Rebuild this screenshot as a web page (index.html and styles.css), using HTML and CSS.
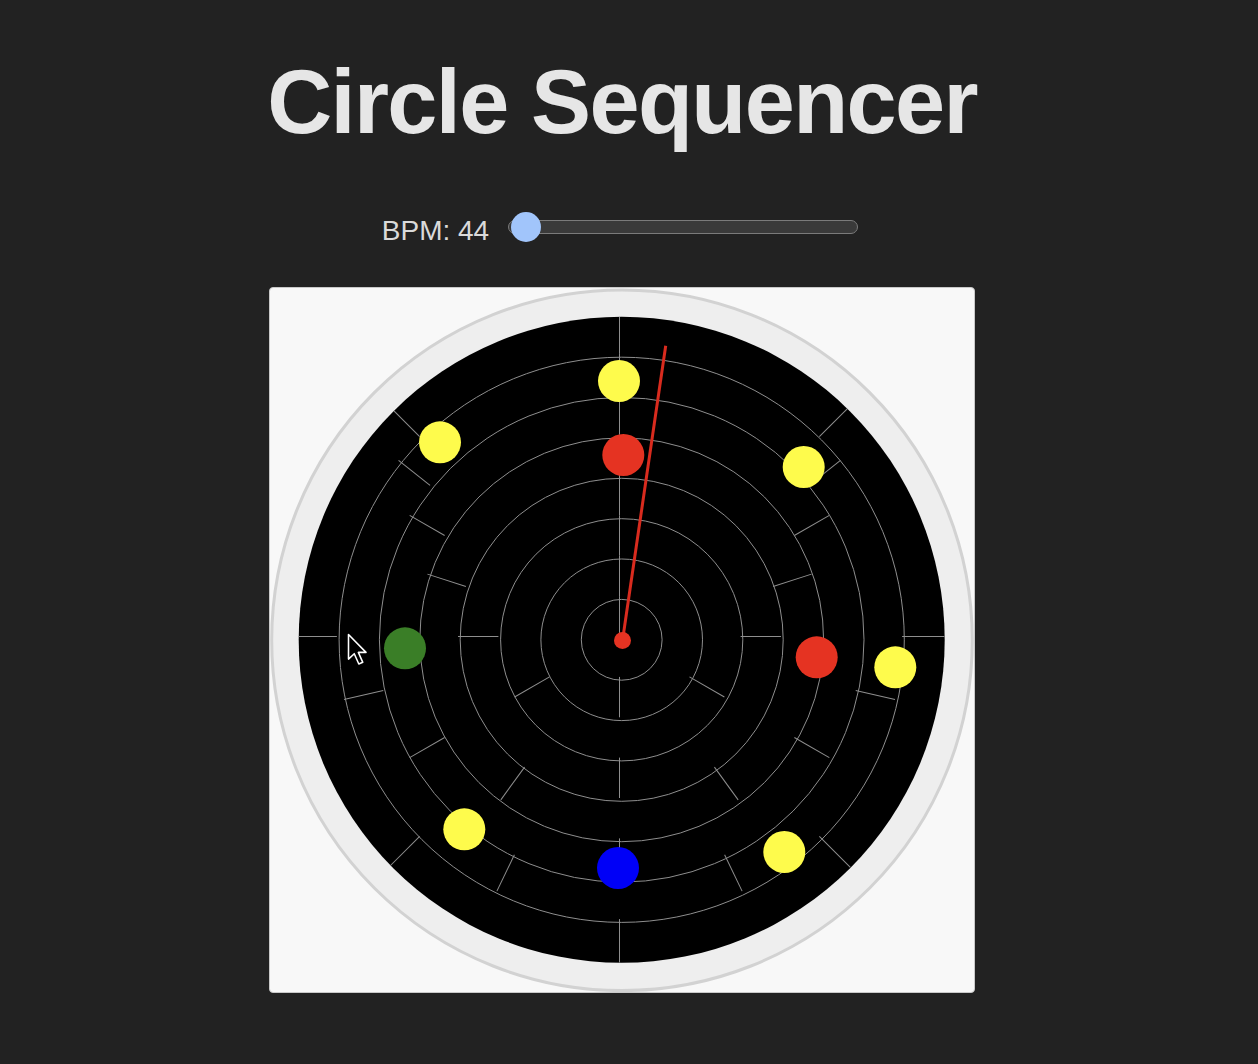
FILE: index.html
```html
<!DOCTYPE html>
<html lang="en">
<head>
<meta charset="utf-8">
<title>Circle Sequencer</title>
<link rel="stylesheet" href="styles.css">
</head>
<body>
<main class="page">
  <h1 class="title">Circle Sequencer</h1>
  <div class="controls">
    <label class="bpm-label" for="bpm">BPM: 44</label>
    <input class="bpm-slider" id="bpm" type="range" min="40" max="1000" value="44">
  </div>
  <div class="card">
    <svg class="sequencer" width="704" height="704" viewBox="0 0 704 704" xmlns="http://www.w3.org/2000/svg">
      <circle class="bezel" cx="352" cy="352.3" r="350.3"/>
      <g transform="translate(351.7 351.8)">
        <circle class="disk" r="323"/>
        <g class="rings">
          <circle r="40.4"/>
          <circle r="80.8"/>
          <circle r="121.1"/>
          <circle r="161.5"/>
          <circle r="201.9"/>
          <circle r="242.3"/>
          <circle r="282.6"/>
        </g>
      </g>
      <g class="spokes" transform="translate(349.5 348.5)">
        <line y1="0" y2="-40.4"/>

        <line y1="-40.4" y2="-80.8"/>
        <line y1="-40.4" y2="-80.8" transform="rotate(180)"/>

        <line y1="-80.8" y2="-121.1"/>
        <line y1="-80.8" y2="-121.1" transform="rotate(120)"/>
        <line y1="-80.8" y2="-121.1" transform="rotate(240)"/>

        <line y1="-121.1" y2="-161.5"/>
        <line y1="-121.1" y2="-161.5" transform="rotate(90)"/>
        <line y1="-121.1" y2="-161.5" transform="rotate(180)"/>
        <line y1="-121.1" y2="-161.5" transform="rotate(270)"/>

        <line y1="-161.5" y2="-201.9"/>
        <line y1="-161.5" y2="-201.9" transform="rotate(72)"/>
        <line y1="-161.5" y2="-201.9" transform="rotate(144)"/>
        <line y1="-161.5" y2="-201.9" transform="rotate(216)"/>
        <line y1="-161.5" y2="-201.9" transform="rotate(288)"/>

        <line y1="-201.9" y2="-242.3"/>
        <line y1="-201.9" y2="-242.3" transform="rotate(60)"/>
        <line y1="-201.9" y2="-242.3" transform="rotate(120)"/>
        <line y1="-201.9" y2="-242.3" transform="rotate(180)"/>
        <line y1="-201.9" y2="-242.3" transform="rotate(240)"/>
        <line y1="-201.9" y2="-242.3" transform="rotate(300)"/>

        <line y1="-242.3" y2="-282.6"/>
        <line y1="-242.3" y2="-282.6" transform="rotate(51.43)"/>
        <line y1="-242.3" y2="-282.6" transform="rotate(102.86)"/>
        <line y1="-242.3" y2="-282.6" transform="rotate(154.29)"/>
        <line y1="-242.3" y2="-282.6" transform="rotate(205.71)"/>
        <line y1="-242.3" y2="-282.6" transform="rotate(257.14)"/>
        <line y1="-242.3" y2="-282.6" transform="rotate(308.57)"/>

        <line y1="-282.6" y2="-319.5"/>
        <line y1="-282.6" y2="-322" transform="rotate(45)"/>
        <line y1="-282.6" y2="-325" transform="rotate(90)"/>
        <line y1="-282.6" y2="-326.5" transform="rotate(135)"/>
        <line y1="-282.6" y2="-326" transform="rotate(180)"/>
        <line y1="-282.6" y2="-323.5" transform="rotate(225)"/>
        <line y1="-282.6" y2="-320.8" transform="rotate(270)"/>
        <line y1="-282.6" y2="-319" transform="rotate(315)"/>
      </g>
      <g class="notes">
        <circle class="note note-yellow" cx="349" cy="93" r="21"/>
        <circle class="note note-red" cx="353.3" cy="167" r="21"/>
        <circle class="note note-yellow" cx="170" cy="154.3" r="21"/>
        <circle class="note note-yellow" cx="533.7" cy="179" r="21"/>
        <circle class="note note-green" cx="135" cy="360.3" r="21"/>
        <circle class="note note-red" cx="546.7" cy="369.3" r="21"/>
        <circle class="note note-yellow" cx="625.3" cy="379.3" r="21"/>
        <circle class="note note-yellow" cx="194.3" cy="541.3" r="21"/>
        <circle class="note note-blue" cx="348" cy="580" r="21"/>
        <circle class="note note-yellow" cx="514.3" cy="564" r="21"/>
      </g>
      <line class="needle" x1="352.5" y1="352.5" x2="395.7" y2="57.7"/>
      <circle class="hub" cx="352.5" cy="352.5" r="8.5"/>
      <path class="cursor" transform="translate(78.5 346.5) scale(1.2)" d="M0 0 L0 20.5 L4.8 16 L8.6 24.6 L11.9 23.2 L8.2 14.9 L14.6 14.9 Z"/>
    </svg>
  </div>
</main>
</body>
</html>
```

FILE: styles.css
```css
html, body {
  margin: 0;
  padding: 0;
  background: #222222;
}

body {
  font-family: "Liberation Sans", Arial, sans-serif;
}

.page {
  width: 1244px;
  display: flex;
  flex-direction: column;
  align-items: center;
  padding-top: 57px;
}

.title {
  margin: 0;
  font-family: "Liberation Sans", Arial, sans-serif;
  font-weight: bold;
  font-size: 90px;
  line-height: 90px;
  letter-spacing: -1.6px;
  color: #e6e6e6;
}

.controls {
  display: flex;
  align-items: center;
  gap: 19px;
  height: 30px;
  margin-top: 65px;
  padding-right: 4px;
}

.bpm-label {
  font-size: 28px;
  line-height: 28px;
  padding-top: 8px;
  color: #dadada;
}

.bpm-slider {
  -webkit-appearance: none;
  appearance: none;
  width: 350px;
  height: 30px;
  margin: 0;
  background: transparent;
}

.bpm-slider::-webkit-slider-runnable-track {
  box-sizing: border-box;
  height: 14px;
  border-radius: 7px;
  background: #3a3a3a;
  border: 1.5px solid #7b7b7b;
}

.bpm-slider::-webkit-slider-thumb {
  -webkit-appearance: none;
  appearance: none;
  width: 30px;
  height: 30px;
  border-radius: 50%;
  background: #a1c5fb;
  border: none;
  margin-top: -9.5px;
}

.card {
  box-sizing: border-box;
  width: 706px;
  height: 706px;
  margin-top: 45px;
  background: #f8f8f8;
  border: 1px solid #c9c9c9;
  border-radius: 4px;
}

.sequencer {
  display: block;
}

.bezel {
  fill: #eeeeee;
  stroke: #d2d2d2;
  stroke-width: 3;
}

.disk {
  fill: #000000;
}

.rings circle {
  fill: none;
  stroke: #8e8e8e;
  stroke-width: 1;
}

.spokes line {
  stroke: #8e8e8e;
  stroke-width: 1;
}

.note-yellow { fill: #fefb4c; }
.note-red { fill: #e53322; }
.note-green { fill: #3a7e27; }
.note-blue { fill: #0000f7; }

.needle {
  stroke: #d92b1e;
  stroke-width: 3;
}

.hub {
  fill: #e53322;
}

.cursor {
  fill: #000000;
  stroke: #ffffff;
  stroke-width: 1.3;
  stroke-linejoin: round;
}
```
